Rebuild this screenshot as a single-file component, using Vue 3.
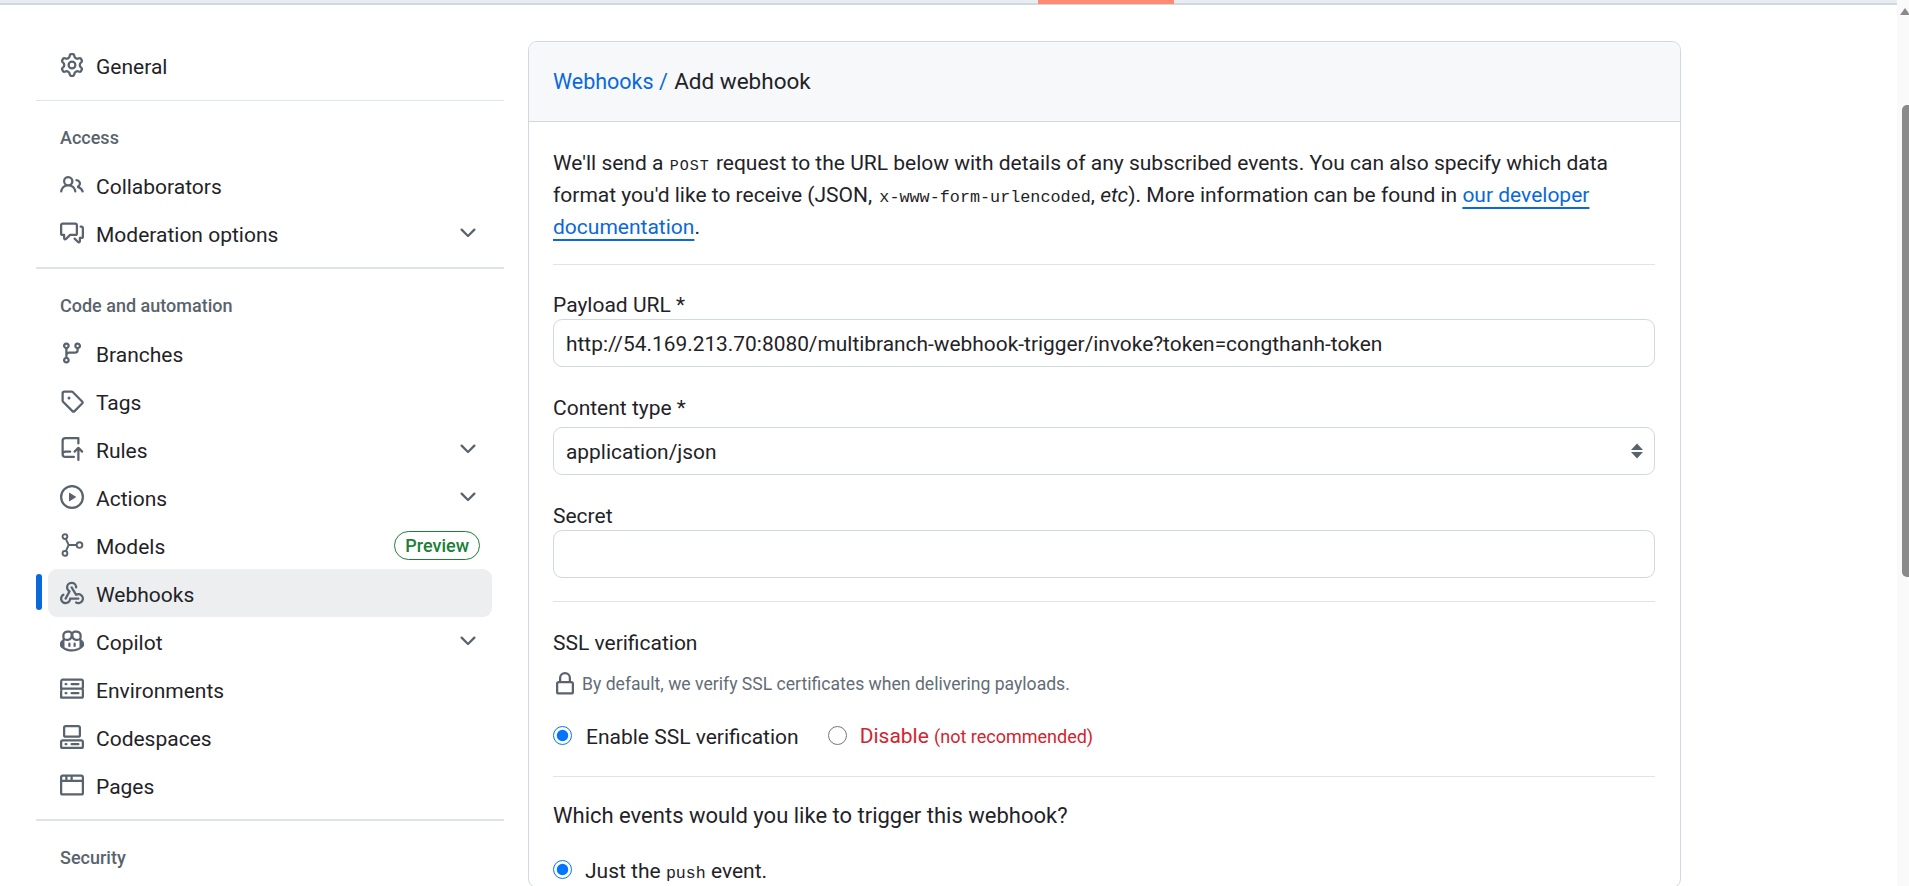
<script setup>
const ic = {
  gear: ['M8 0a8.2 8.2 0 0 1 .701.031C9.444.095 9.99.645 10.16 1.29l.288 1.107c.018.066.079.158.212.224.231.114.454.243.668.386.123.082.233.09.299.071l1.103-.303c.644-.176 1.392.021 1.82.63.27.385.506.792.704 1.218.315.675.111 1.422-.364 1.891l-.814.806c-.049.048-.098.147-.088.294.016.257.016.515 0 .772-.01.147.038.246.088.294l.814.806c.475.469.679 1.216.364 1.891a7.977 7.977 0 0 1-.704 1.217c-.428.61-1.176.807-1.82.63l-1.102-.302c-.067-.019-.177-.011-.3.071a5.909 5.909 0 0 1-.668.386c-.133.066-.194.158-.211.224l-.29 1.106c-.168.646-.715 1.196-1.458 1.26a8.006 8.006 0 0 1-1.402 0c-.743-.064-1.289-.614-1.458-1.26l-.289-1.106c-.018-.066-.079-.158-.212-.224a5.738 5.738 0 0 1-.668-.386c-.123-.082-.233-.09-.299-.071l-1.103.303c-.644.176-1.392-.021-1.82-.63a8.12 8.12 0 0 1-.704-1.218c-.315-.675-.111-1.422.363-1.891l.815-.806c.05-.048.098-.147.088-.294a6.214 6.214 0 0 1 0-.772c.01-.147-.038-.246-.088-.294l-.815-.806C.635 6.045.431 5.298.746 4.623a7.92 7.92 0 0 1 .704-1.217c.428-.61 1.176-.807 1.82-.63l1.102.302c.067.019.177.011.3-.071.214-.143.437-.272.668-.386.133-.066.194-.158.211-.224l.29-1.106C6.009.645 6.556.095 7.299.03 7.53.01 7.764 0 8 0Zm-.571 1.525c-.036.003-.108.036-.137.146l-.289 1.105c-.147.561-.549.967-.998 1.189-.173.086-.34.183-.5.29-.417.278-.97.423-1.529.27l-1.103-.303c-.109-.03-.175.016-.195.045-.22.312-.412.644-.573.99-.014.031-.021.11.059.19l.815.806c.411.406.562.957.53 1.456a4.709 4.709 0 0 0 0 .582c.032.499-.119 1.05-.53 1.456l-.815.806c-.081.08-.073.159-.059.19.162.346.353.677.573.989.02.03.085.076.195.046l1.102-.303c.56-.153 1.113-.008 1.53.27.161.107.328.204.501.29.447.222.85.629.997 1.189l.289 1.105c.029.109.101.143.137.146a6.6 6.6 0 0 0 1.142 0c.036-.003.108-.036.137-.146l.289-1.105c.147-.561.549-.967.998-1.189.173-.086.34-.183.5-.29.417-.278.97-.423 1.529-.27l1.103.303c.109.029.175-.016.195-.045.22-.313.411-.644.573-.99.014-.031.021-.11-.059-.19l-.815-.806c-.411-.406-.562-.957-.53-1.456a4.709 4.709 0 0 0 0-.582c-.032-.499.119-1.05.53-1.456l.815-.806c.081-.08.073-.159.059-.19a6.464 6.464 0 0 0-.573-.989c-.02-.03-.085-.076-.195-.046l-1.102.303c-.56.153-1.113.008-1.53-.27a4.44 4.44 0 0 0-.501-.29c-.447-.222-.85-.629-.997-1.189l-.289-1.105c-.029-.11-.101-.143-.137-.146a6.6 6.6 0 0 0-1.142 0ZM11 8a3 3 0 1 1-6 0 3 3 0 0 1 6 0ZM9.5 8a1.5 1.5 0 1 0-3.001.001A1.5 1.5 0 0 0 9.5 8Z'],
  people: ['M2 5.5a3.5 3.5 0 1 1 5.898 2.549 5.508 5.508 0 0 1 3.034 4.084.75.75 0 1 1-1.482.235 4 4 0 0 0-7.9 0 .75.75 0 0 1-1.482-.236A5.507 5.507 0 0 1 3.102 8.05 3.493 3.493 0 0 1 2 5.5ZM11 4a3.001 3.001 0 0 1 2.22 5.018 5.01 5.01 0 0 1 2.56 3.012.749.749 0 0 1-.885.954.752.752 0 0 1-.549-.514 3.507 3.507 0 0 0-2.522-2.372.75.75 0 0 1-.574-.73v-.352a.75.75 0 0 1 .416-.672A1.5 1.5 0 0 0 11 5.5.75.75 0 0 1 11 4Zm-5.5-.5a2 2 0 1 0-.001 3.999A2 2 0 0 0 5.5 3.5Z'],
  discussion: ['M1.75 1h8.5c.966 0 1.75.784 1.75 1.75v5.5A1.75 1.75 0 0 1 10.25 10H7.061l-2.574 2.573A1.458 1.458 0 0 1 2 11.543V10h-.25A1.75 1.75 0 0 1 0 8.25v-5.5C0 1.784.784 1 1.75 1ZM1.5 2.75v5.5c0 .138.112.25.25.25h1a.75.75 0 0 1 .75.75v2.19l2.72-2.72a.749.749 0 0 1 .53-.22h3.5a.25.25 0 0 0 .25-.25v-5.5a.25.25 0 0 0-.25-.25h-8.5a.25.25 0 0 0-.25.25Zm13 2a.25.25 0 0 0-.25-.25h-.5a.75.75 0 0 1 0-1.5h.5c.966 0 1.75.784 1.75 1.75v5.5A1.75 1.75 0 0 1 14.25 12H14v1.543a1.458 1.458 0 0 1-2.487 1.03L9.22 12.28a.749.749 0 0 1 .326-1.275.749.749 0 0 1 .734.215l2.22 2.22v-2.19a.75.75 0 0 1 .75-.75h1a.25.25 0 0 0 .25-.25Z'],
  branch: ['M9.5 3.25a2.25 2.25 0 1 1 3 2.122V6A2.5 2.5 0 0 1 10 8.5H6a1 1 0 0 0-1 1v1.128a2.251 2.251 0 1 1-1.5 0V5.372a2.25 2.25 0 1 1 1.5 0v1.836A2.493 2.493 0 0 1 6 7h4a1 1 0 0 0 1-1v-.628A2.25 2.25 0 0 1 9.5 3.25Zm-6 0a.75.75 0 1 0 1.5 0 .75.75 0 0 0-1.5 0Zm8.25-.75a.75.75 0 1 0 0 1.5.75.75 0 0 0 0-1.5ZM4.25 12a.75.75 0 1 0 0 1.5.75.75 0 0 0 0-1.5Z'],
  tag: ['M1 7.775V2.75C1 1.784 1.784 1 2.75 1h5.025c.464 0 .91.184 1.238.513l6.25 6.25a1.75 1.75 0 0 1 0 2.474l-5.026 5.026a1.75 1.75 0 0 1-2.474 0l-6.25-6.25A1.752 1.752 0 0 1 1 7.775Zm1.5 0c0 .066.026.13.073.177l6.25 6.25a.25.25 0 0 0 .354 0l5.025-5.025a.25.25 0 0 0 0-.354l-6.25-6.25a.25.25 0 0 0-.177-.073H2.75a.25.25 0 0 0-.25.25ZM6 5a1 1 0 1 1 0 2 1 1 0 0 1 0-2Z'],
  push: ['M1 2.5A2.5 2.5 0 0 1 3.5 0h8.75a.75.75 0 0 1 .75.75v3.5a.75.75 0 0 1-1.5 0V1.5h-8a1 1 0 0 0-1 1v6.708A2.493 2.493 0 0 1 3.5 9h3.25a.75.75 0 0 1 0 1.5H3.5a1 1 0 0 0 0 2h5.75a.75.75 0 0 1 0 1.5H3.5A2.5 2.5 0 0 1 1 11.5Zm13.23 7.79h-.001l-1.224-1.224v6.184a.75.75 0 0 1-1.5 0V9.066L10.28 10.29a.75.75 0 0 1-1.06-1.061l2.505-2.504a.75.75 0 0 1 1.06 0L15.29 9.23a.751.751 0 0 1-.018 1.042.751.751 0 0 1-1.042.018Z'],
  play: ['M8 0a8 8 0 1 1 0 16A8 8 0 0 1 8 0ZM1.5 8a6.5 6.5 0 1 0 13 0 6.5 6.5 0 0 0-13 0Zm4.879-2.773 4.264 2.559a.25.25 0 0 1 0 .428l-4.264 2.559A.25.25 0 0 1 6 10.559V5.442a.25.25 0 0 1 .379-.215Z'],
  webhook: ['M5.5 4.25a2.25 2.25 0 0 1 4.5 0 .75.75 0 0 0 1.5 0 3.75 3.75 0 1 0-6.14 2.889l-2.272 4.258a.75.75 0 0 0 1.324.706L7 7.25a.75.75 0 0 0-.309-1.015A2.25 2.25 0 0 1 5.5 4.25Z', 'M7.364 3.607a.75.75 0 0 1 1.03.257l2.608 4.349a3.75 3.75 0 1 1-.628 6.785.75.75 0 0 1 .752-1.299 2.25 2.25 0 1 0-.033-3.88.75.75 0 0 1-1.03-.256L7.107 4.636a.75.75 0 0 1 .257-1.03Z', 'M2.9 8.776A.75.75 0 0 1 2.625 9.8 2.25 2.25 0 1 0 6 11.75a.75.75 0 0 1 .75-.751h5.5a.75.75 0 0 1 0 1.5H7.425a3.751 3.751 0 1 1-5.55-3.998.75.75 0 0 1 1.024.274Z'],
  copilot: ['M7.998 15.035c-4.562 0-7.873-2.914-7.998-3.749V9.338c.085-.628.677-1.686 1.588-2.065.013-.07.024-.143.036-.218.029-.183.06-.384.126-.612-.201-.508-.254-1.084-.254-1.656 0-.87.128-1.769.693-2.484.579-.733 1.494-1.124 2.724-1.261 1.206-.134 2.262.034 2.944.765.05.053.096.108.139.165.044-.057.094-.112.143-.165.682-.731 1.738-.899 2.944-.765 1.23.137 2.145.528 2.724 1.261.566.715.693 1.614.693 2.484 0 .572-.053 1.148-.254 1.656.066.228.098.429.126.612.012.076.024.148.037.218.924.385 1.522 1.471 1.591 2.095v1.872c0 .766-3.351 3.795-8.002 3.795Zm0-1.485c2.28 0 4.584-1.11 5.002-1.433V7.862l-.023-.116c-.49.21-1.075.291-1.727.291-1.146 0-2.059-.327-2.71-.991A3.222 3.222 0 0 1 8 6.303a3.24 3.24 0 0 1-.544.743c-.65.664-1.563.991-2.71.991-.652 0-1.236-.081-1.727-.291l-.023.116v4.255c.419.323 2.722 1.433 5.002 1.433ZM6.762 2.83c-.193-.206-.637-.413-1.682-.297-1.019.113-1.479.404-1.713.7-.247.312-.369.789-.369 1.554 0 .793.129 1.171.308 1.371.162.181.519.379 1.442.379.853 0 1.339-.235 1.638-.54.315-.322.527-.827.617-1.553.117-.935-.037-1.395-.241-1.614Zm4.155-.297c-1.044-.116-1.488.091-1.681.297-.204.219-.359.679-.242 1.614.091.726.303 1.231.618 1.553.299.305.784.54 1.638.54.922 0 1.28-.198 1.442-.379.179-.2.308-.578.308-1.371 0-.765-.123-1.242-.37-1.554-.233-.296-.693-.587-1.713-.7Z', 'M6.25 9.037a.75.75 0 0 1 .75.75v1.501a.75.75 0 0 1-1.5 0V9.787a.75.75 0 0 1 .75-.75Zm4.25.75v1.501a.75.75 0 0 1-1.5 0V9.787a.75.75 0 0 1 1.5 0Z'],
  server: ['M1.75 1h12.5c.966 0 1.75.784 1.75 1.75v4c0 .372-.116.717-.314 1 .198.283.314.628.314 1v4a1.75 1.75 0 0 1-1.75 1.75H1.75A1.75 1.75 0 0 1 0 13.75v-4c0-.372.116-.717.314-1a1.739 1.739 0 0 1-.314-1v-4C0 1.784.784 1 1.75 1ZM1.5 2.75v4c0 .138.112.25.25.25h12.5a.25.25 0 0 0 .25-.25v-4a.25.25 0 0 0-.25-.25H1.75a.25.25 0 0 0-.25.25Zm.25 5.75a.25.25 0 0 0-.25.25v4c0 .138.112.25.25.25h12.5a.25.25 0 0 0 .25-.25v-4a.25.25 0 0 0-.25-.25ZM7 4.75A.75.75 0 0 1 7.75 4h4.5a.75.75 0 0 1 0 1.5h-4.5A.75.75 0 0 1 7 4.75ZM7.75 10h4.5a.75.75 0 0 1 0 1.5h-4.5a.75.75 0 0 1 0-1.5ZM3 4.75A.75.75 0 0 1 3.75 4h.5a.75.75 0 0 1 0 1.5h-.5A.75.75 0 0 1 3 4.75ZM3.75 10h.5a.75.75 0 0 1 0 1.5h-.5a.75.75 0 0 1 0-1.5Z'],
  codespaces: ['M0 11.25c0-.966.784-1.75 1.75-1.75h12.5c.966 0 1.75.784 1.75 1.75v3A1.75 1.75 0 0 1 14.25 16H1.75A1.75 1.75 0 0 1 0 14.25Zm2-9.5C2 .784 2.784 0 3.75 0h8.5C13.216 0 14 .784 14 1.75v5a1.75 1.75 0 0 1-1.75 1.75h-8.5A1.75 1.75 0 0 1 2 6.75Zm1.75-.25a.25.25 0 0 0-.25.25v5c0 .138.112.25.25.25h8.5a.25.25 0 0 0 .25-.25v-5a.25.25 0 0 0-.25-.25Zm-2 9.5a.25.25 0 0 0-.25.25v3c0 .138.112.25.25.25h12.5a.25.25 0 0 0 .25-.25v-3a.25.25 0 0 0-.25-.25Z', 'M7 12.75a.75.75 0 0 1 .75-.75h4.5a.75.75 0 0 1 0 1.5h-4.5a.75.75 0 0 1-.75-.75Zm-4 0a.75.75 0 0 1 .75-.75h.5a.75.75 0 0 1 0 1.5h-.5a.75.75 0 0 1-.75-.75Z'],
  browser: ['M0 2.75C0 1.784.784 1 1.75 1h12.5c.966 0 1.75.784 1.75 1.75v10.5A1.75 1.75 0 0 1 14.25 15H1.75A1.75 1.75 0 0 1 0 13.25ZM14.5 6h-13v7.25c0 .138.112.25.25.25h12.5a.25.25 0 0 0 .25-.25Zm-6-3.5v2h6v-1.75a.25.25 0 0 0-.25-.25ZM5 2.5v2h2v-2Zm-3.25 0a.25.25 0 0 0-.25.25V4.5h2v-2Z'],
  lock: ['M4 4a4 4 0 0 1 8 0v2h.25c.966 0 1.75.784 1.75 1.75v5.5A1.75 1.75 0 0 1 12.25 15h-8.5A1.75 1.75 0 0 1 2 13.25v-5.5C2 6.784 2.784 6 3.75 6H4Zm8.25 3.5h-8.5a.25.25 0 0 0-.25.25v5.5c0 .138.112.25.25.25h8.5a.25.25 0 0 0 .25-.25v-5.5a.25.25 0 0 0-.25-.25ZM10.5 6V4a2.5 2.5 0 1 0-5 0v2Z'],
  chevron: ['M12.78 5.22a.749.749 0 0 1 0 1.06l-4.25 4.25a.749.749 0 0 1-1.06 0L3.22 6.28a.749.749 0 1 1 1.06-1.06L8 8.939l3.72-3.719a.749.749 0 0 1 1.06 0Z']
}

const navGroups = [
  { items: [{ name: 'General', icon: ic.gear }] },
  {
    label: 'Access',
    items: [
      { name: 'Collaborators', icon: ic.people },
      { name: 'Moderation options', icon: ic.discussion, more: true }
    ]
  },
  {
    label: 'Code and automation',
    items: [
      { name: 'Branches', icon: ic.branch },
      { name: 'Tags', icon: ic.tag },
      { name: 'Rules', icon: ic.push, more: true },
      { name: 'Actions', icon: ic.play, more: true },
      { name: 'Models', model: true, badge: 'Preview' },
      { name: 'Webhooks', icon: ic.webhook, active: true },
      { name: 'Copilot', icon: ic.copilot, more: true },
      { name: 'Environments', icon: ic.server },
      { name: 'Codespaces', icon: ic.codespaces },
      { name: 'Pages', icon: ic.browser }
    ]
  },
  { label: 'Security', items: [] }
]
</script>

<template>
  <div class="window">
    <div class="page">
      <div class="topstrip"><span class="progress"></span></div>
      <div class="columns">
        <nav class="sidebar">
          <div v-for="(group, i) in navGroups" :key="i" class="group">
            <div v-if="group.label" class="divider" :class="{ thin: i === 1 }"></div>
            <div v-if="group.label" class="group-label">{{ group.label }}</div>
            <a v-for="item in group.items" :key="item.name" class="nav-item" :class="{ active: item.active }">
              <svg v-if="item.model" class="icon model" viewBox="0 0 16 16">
                <circle cx="3.3" cy="2.4" r="1.6" />
                <circle cx="3.3" cy="13.6" r="1.6" />
                <circle cx="13" cy="8" r="1.9" />
                <path d="M3.9 3.9 5.8 8 3.9 12.1M5.8 8H11" />
              </svg>
              <svg v-else class="icon" viewBox="0 0 16 16"><path v-for="d in item.icon" :key="d" :d="d" /></svg>
              <span class="nav-name">{{ item.name }}</span>
              <span v-if="item.badge" class="badge">{{ item.badge }}</span>
              <svg v-if="item.more" class="chevron" viewBox="0 0 16 16"><path :d="ic.chevron[0]" /></svg>
            </a>
          </div>
        </nav>

        <main class="card">
          <div class="card-head"><a class="link">Webhooks /</a> <span class="crumb">Add webhook</span></div>
          <div class="card-body">
            <p class="intro">
              We'll send a <code class="caps">post</code> request to the URL below with details of any subscribed events. You can also specify which data
              format you'd like to receive (JSON, <code class="type">x-www-form-urlencoded</code>, <em>etc</em>). More information can be found in
              <a class="link line">our developer documentation</a>.
            </p>
            <hr />
            <label class="field-label">Payload URL *</label>
            <input class="control" type="text" value="http://54.169.213.70:8080/multibranch-webhook-trigger/invoke?token=congthanh-token" />
            <label class="field-label for-select">Content type *</label>
            <div class="select-wrap">
              <select class="control">
                <option>application/json</option>
              </select>
              <svg class="updown" viewBox="0 0 12 16"><path d="M6 .5l6 6.5H0zM6 15.5L0 9h12z" /></svg>
            </div>
            <label class="field-label">Secret</label>
            <input class="control" type="password" />
            <hr class="after-secret" />
            <div class="section-title">SSL verification</div>
            <div class="note">
              <svg class="icon lock" viewBox="0 0 16 16"><path :d="ic.lock[0]" /></svg>
              <span>By default, we verify SSL certificates when delivering payloads.</span>
            </div>
            <div class="radios">
              <label class="radio"><input type="radio" name="ssl" checked /> <span>Enable SSL verification</span></label>
              <label class="radio danger"><input type="radio" name="ssl" /> <span>Disable <small>(not recommended)</small></span></label>
            </div>
            <hr class="after-ssl" />
            <div class="section-title events">Which events would you like to trigger this webhook?</div>
            <label class="radio just"><input type="radio" name="events" checked /> <span>Just the <code>push</code> event.</span></label>
          </div>
        </main>
      </div>
    </div>
    <div class="scrollbar">
      <span class="arrow"></span>
      <span class="thumb"></span>
    </div>
  </div>
</template>

<style>
html, body { margin: 0; height: 100%; overflow: hidden; background: #fff; }
</style>

<style scoped>
.window {
  display: flex;
  height: 886px;
  overflow: hidden;
  font-family: Roboto, "Liberation Sans", sans-serif;
  font-size: 21px;
  line-height: 32px;
  color: #1f2328;
  background: #fff;
}
.page { flex: 1; min-width: 0; }
.topstrip {
  position: relative;
  height: 3px;
  background: #e9edf1;
  border-bottom: 2px solid #d1d9e0;
}
.progress {
  position: absolute;
  left: 1038px;
  top: 0;
  width: 136px;
  height: 4px;
  background: #fd8c73;
}
.columns {
  display: flex;
  gap: 24px;
  padding-left: 36px;
  align-items: flex-start;
}
.sidebar { width: 468px; flex: none; padding-top: 36px; }
.divider { height: 2px; background: #dfe4e8; margin-top: 10px; }
.divider.thin { height: 1px; margin-top: 11px; }
.group-label {
  padding: 25px 24px 11px;
  font-size: 18px;
  font-weight: 500;
  line-height: 24px;
  color: #59636e;
}
.nav-item {
  position: relative;
  display: flex;
  align-items: center;
  gap: 12px;
  height: 48px;
  margin: 0 12px;
  padding: 0 12px;
  border-radius: 9px;
}
.nav-item.active { background: #eceef0; }
.nav-item.active::before {
  content: "";
  position: absolute;
  left: -12px;
  top: 5px;
  width: 6px;
  height: 36px;
  border-radius: 6px;
  background: #0969da;
}
.icon { width: 24px; height: 24px; flex: none; fill: #59636e; }
.icon.model { fill: none; stroke: #59636e; stroke-width: 1.3; }
.nav-name { flex: 1; padding-top: 4px; }
.chevron { width: 24px; height: 24px; flex: none; fill: #59636e; }
.badge {
  height: 27px;
  padding: 0 10px;
  border: 1px solid #1a7f37;
  border-radius: 15px;
  color: #1a7f37;
  font-size: 18px;
  font-weight: 500;
  line-height: 27px;
}
.card {
  width: 1153px;
  flex: none;
  margin-top: 36px;
  border: 1px solid #d1d9e0;
  border-radius: 9px;
  box-sizing: border-box;
}
.card-head {
  padding: 2px 24px 1px;
  line-height: 76px;
  font-size: 21.5px;
  background: #f6f8fa;
  border-bottom: 1px solid #d1d9e0;
  border-radius: 9px 9px 0 0;
}
.crumb { margin-left: 1px; font-size: 22.5px; line-height: 1; }
.link { color: #0969da; }
.link.line {
  text-decoration: underline 2px;
  text-underline-offset: 5px;
  text-decoration-skip-ink: none;
}
.card-body { padding: 25px 25px 0 24px; }
.intro { margin: 0; }
code {
  font-family: "Liberation Mono", monospace;
  font-size: 16.6px;
  line-height: 1;
}
.type { margin-left: 2px; font-size: 16.8px; }
.caps {
  margin: 0 1px;
  text-transform: uppercase;
  font-size: 15px;
  letter-spacing: 1px;
}
hr {
  height: 1px;
  margin: 21px 0 0;
  border: 0;
  background: #dfe4e8;
}
.field-label { display: block; margin-top: 27px; line-height: 28px; }
hr + .field-label { margin-top: 26px; }
.for-select { margin-bottom: 5px; }
.control {
  display: block;
  width: 100%;
  height: 48px;
  padding: 2px 12px 0;
  box-sizing: border-box;
  border: 1px solid #d1d9e0;
  border-radius: 9px;
  background: #fff;
  color: #1f2328;
  font: inherit;
  font-size: 20.9px;
  outline: none;
  appearance: none;
}
.select-wrap { position: relative; }
.updown {
  position: absolute;
  right: 12px;
  top: 16px;
  width: 12px;
  height: 16px;
  fill: #59636e;
}
.after-secret { margin-top: 23px; }
.section-title { margin-top: 25px; }
.events { margin-top: 23px; font-size: 22px; }
.note {
  display: flex;
  align-items: center;
  gap: 5px;
  margin-top: 13px;
  font-size: 17.6px;
  line-height: 24px;
  color: #636c76;
}
.radios { display: flex; gap: 29px; margin-top: 24px; }
.radio { display: flex; align-items: center; gap: 14px; }
.radio input { width: 19px; height: 19px; margin: -3px 0 0; accent-color: #0075ff; }
.danger { gap: 13px; color: #d1242f; }
.danger small { font-size: 18px; }
.after-ssl { margin-top: 23px; }
.just { margin-top: 23px; gap: 13px; }
.scrollbar {
  position: relative;
  width: 12px;
  flex: none;
  background: #fafafa;
}
.arrow {
  position: absolute;
  left: 3px;
  top: 8px;
  border: 5px solid transparent;
  border-top: 0;
  border-bottom: 7px solid #8a8a8a;
}
.thumb {
  position: absolute;
  left: 5px;
  right: 0;
  top: 105px;
  height: 472px;
  border-radius: 5px 0 0 5px;
  background: #8a8a8a;
}
</style>
